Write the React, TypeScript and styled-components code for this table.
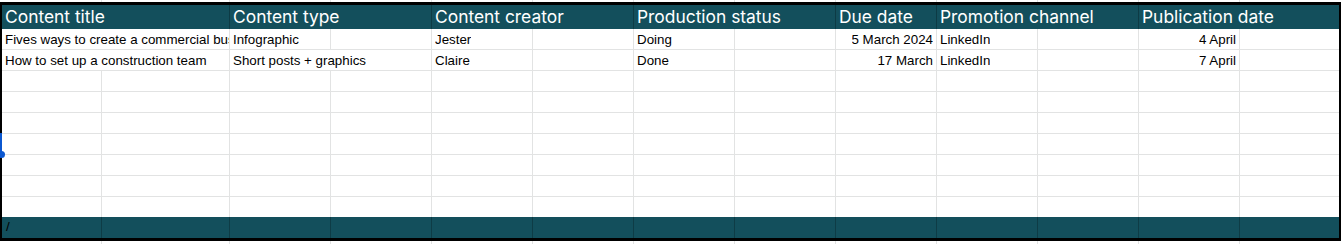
import React from "react";
import styled, { createGlobalStyle, css } from "styled-components";

const GlobalStyle = createGlobalStyle`
  html, body { margin: 0; padding: 0; background: #ffffff; }
  body { width: 1341px; height: 244px; overflow: hidden; }
`;

const TEAL = "#134f5c";
const GRID = "#e2e3e3";
const COLS = "100px 128px repeat(10, 101px) 99px";

const Sheet = styled.div`
  width: 1341px;
  display: flex;
  flex-direction: column;
`;

const Strip = styled.div<{ $h: number }>`
  display: grid;
  grid-template-columns: ${COLS};
  height: ${(p) => p.$h}px;
  padding: 0 2px;
`;

const StripCell = styled.div<{ $last?: boolean }>`
  border-right: ${(p) => (p.$last ? "none" : `1px solid ${GRID}`)};
`;

const Frame = styled.div`
  position: relative;
  border-style: solid;
  border-color: #000000;
  border-width: 3px 2px 3px 2px;
  display: flex;
  flex-direction: column;
`;

const Row = styled.div<{ $h: number }>`
  display: grid;
  grid-template-columns: ${COLS};
  height: ${(p) => p.$h}px;
`;

const HeaderRow = styled(Row)`
  background: ${TEAL};
`;

const FooterRow = styled(Row)`
  background: ${TEAL};
`;

const HeaderCell = styled.div<{ $span: number; $last?: boolean }>`
  grid-column: span ${(p) => p.$span};
  box-sizing: border-box;
  border-right: ${(p) => (p.$last ? "none" : "1px solid #0d3b45")};
  display: flex;
  align-items: flex-end;
  padding: 0 3px 2px 3px;
  overflow: hidden;
  white-space: nowrap;
  font-family: "Inter", "Noto Sans", sans-serif;
  font-size: 17.4px;
  line-height: 20px;
  color: #ffffff;
`;

const Cell = styled.div<{
  $span?: number;
  $right?: boolean;
  $last?: boolean;
  $bottom?: boolean;
}>`
  grid-column: span ${(p) => p.$span ?? 1};
  box-sizing: border-box;
  min-width: 0;
  border-right: ${(p) => (p.$last ? "none" : `1px solid ${GRID}`)};
  ${(p) =>
    p.$bottom &&
    css`
      border-bottom: 1px solid ${GRID};
    `}
  display: flex;
  align-items: flex-end;
  justify-content: ${(p) => (p.$right ? "flex-end" : "flex-start")};
  padding: 0 ${(p) => (p.$right ? 3 : 0)}px 1px 3px;
  overflow: hidden;
  white-space: nowrap;
  font-family: "Liberation Sans", Arial, sans-serif;
  font-size: 13.33px;
  line-height: 16px;
  color: #000000;
`;

const CellText = styled.span`
  display: block;
  min-width: 0;
  overflow: hidden;
  white-space: nowrap;
`;

const FooterCell = styled.div<{ $last?: boolean }>`
  box-sizing: border-box;
  border-right: ${(p) => (p.$last ? "none" : "1px solid #0e3c46")};
  display: flex;
  align-items: flex-end;
  padding: 0 4px 3px 4px;
  overflow: hidden;
  white-space: nowrap;
  font-family: "Liberation Sans", Arial, sans-serif;
  font-size: 13.33px;
  line-height: 16px;
  color: #000000;
`;

const SelectionEdge = styled.div`
  position: absolute;
  left: -2px;
  top: 128px;
  width: 2px;
  height: 21px;
  background: #0b57d0;
`;

const SelectionHandle = styled.div`
  position: absolute;
  left: -4px;
  top: 146px;
  width: 7px;
  height: 7px;
  border-radius: 50%;
  background: #0b57d0;
`;

type CellSpec = { text?: string; span?: number; right?: boolean };

const headers: { text: string; span: number }[] = [
  { text: "Content title", span: 2 },
  { text: "Content type", span: 2 },
  { text: "Content creator", span: 2 },
  { text: "Production status", span: 2 },
  { text: "Due date", span: 1 },
  { text: "Promotion channel", span: 2 },
  { text: "Publication date", span: 2 },
];

const dataRows: CellSpec[][] = [
  [
    { text: "Fives ways to create a commercial business plan", span: 2 },
    { text: "Infographic" },
    {},
    { text: "Jester" },
    {},
    { text: "Doing" },
    {},
    { text: "5 March 2024", right: true },
    { text: "LinkedIn" },
    {},
    { text: "4 April", right: true },
    {},
  ],
  [
    { text: "How to set up a construction team", span: 2 },
    { text: "Short posts + graphics", span: 2 },
    { text: "Claire" },
    {},
    { text: "Done" },
    {},
    { text: "17 March", right: true },
    { text: "LinkedIn" },
    {},
    { text: "7 April", right: true },
    {},
  ],
];

const EMPTY_ROWS = 7;
const cols = Array.from({ length: 13 }, (_, i) => i);

function EmptyRow({ h, bottom }: { h: number; bottom: boolean }) {
  return (
    <Row $h={h}>
      {cols.map((i) => (
        <Cell key={i} $last={i === 12} $bottom={bottom} />
      ))}
    </Row>
  );
}

export default function App() {
  return (
    <>
      <GlobalStyle />
      <Sheet>
        <Strip $h={2}>
          {cols.map((i) => (
            <StripCell key={i} $last={i === 12} />
          ))}
        </Strip>
        <Frame>
          <HeaderRow $h={24}>
            {headers.map((h, i) => (
              <HeaderCell key={h.text} $span={h.span} $last={i === headers.length - 1}>
                {h.text}
              </HeaderCell>
            ))}
          </HeaderRow>
          {dataRows.map((r, ri) => (
            <Row $h={21} key={ri}>
              {r.map((c, ci) => (
                <Cell
                  key={ci}
                  $span={c.span}
                  $right={c.right}
                  $last={ci === r.length - 1}
                  $bottom
                >
                  {c.text ? <CellText>{c.text}</CellText> : null}
                </Cell>
              ))}
            </Row>
          ))}
          {Array.from({ length: EMPTY_ROWS }, (_, i) => (
            <EmptyRow key={i} h={i === EMPTY_ROWS - 1 ? 20 : 21} bottom={i !== EMPTY_ROWS - 1} />
          ))}
          <FooterRow $h={21}>
            {cols.map((i) => (
              <FooterCell key={i} $last={i === 12}>
                {i === 0 ? "/" : null}
              </FooterCell>
            ))}
          </FooterRow>
          <SelectionEdge />
          <SelectionHandle />
        </Frame>
        <Strip $h={3}>
          {cols.map((i) => (
            <StripCell key={i} $last={i === 12} />
          ))}
        </Strip>
      </Sheet>
    </>
  );
}
